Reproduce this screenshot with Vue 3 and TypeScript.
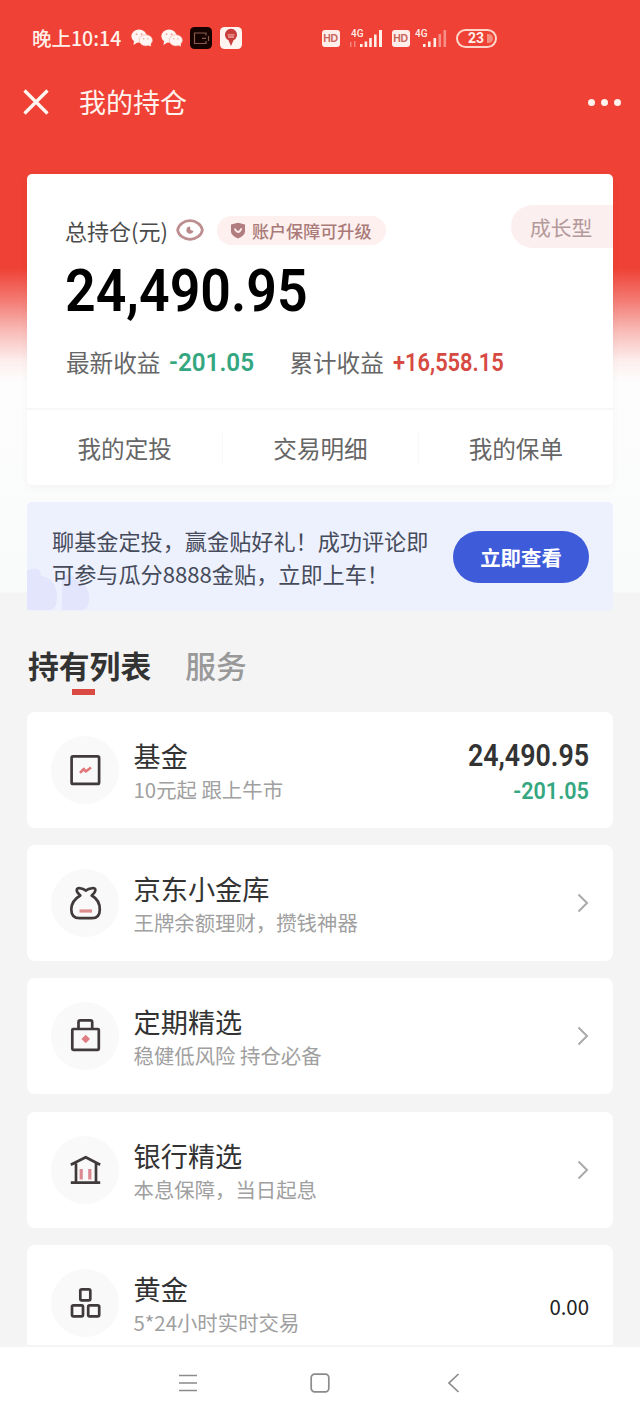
<script setup lang="ts">
interface Holding {
  icon: 'fund' | 'bag' | 'lock' | 'bank' | 'gold'
  title: string
  desc: string
  amount?: string
  change?: string
}

const holdings: Holding[] = [
  { icon: 'fund', title: '基金', desc: '10元起 跟上牛市', amount: '24,490.95', change: '-201.05' },
  { icon: 'bag', title: '京东小金库', desc: '王牌余额理财，攒钱神器' },
  { icon: 'lock', title: '定期精选', desc: '稳健低风险 持仓必备' },
  { icon: 'bank', title: '银行精选', desc: '本息保障，当日起息' },
  { icon: 'gold', title: '黄金', desc: '5*24小时实时交易', amount: '0.00' },
]
const links: string[] = ['我的定投', '交易明细', '我的保单']
</script>

<template>
  <div class="screen">
    <header class="status">
      <span class="clock">晚上10:14</span>
      <svg v-for="n in 2" :key="n" class="wechat" viewBox="0 0 22 18">
        <ellipse cx="8" cy="7.2" rx="7.6" ry="6.6" fill="#fff5f2" />
        <path d="M3 12 L2.5 16 L7 13Z" fill="#fff5f2" />
        <ellipse cx="14.8" cy="11.3" rx="6.6" ry="5.6" fill="#fff5f2" stroke="#f2a59a" stroke-width=".6" />
        <path d="M17 16 L20 17.5 L19.5 14Z" fill="#fff5f2" />
        <g fill="#efa294"><circle cx="5.5" cy="5.2" r=".9" /><circle cx="10.6" cy="5.2" r=".9" /><circle cx="12.7" cy="9.8" r=".7" /><circle cx="17" cy="9.8" r=".7" /></g>
      </svg>
      <svg class="app wallet" viewBox="0 0 22 22">
        <rect width="22" height="22" rx="4.5" fill="#160300" />
        <path d="M16 8.500V6H4.500V16.500H16V14M12 11.300h4M18.500 9v5" fill="none" stroke="#8b5a4c" stroke-width="1.200" />
      </svg>
      <svg class="app" viewBox="0 0 22 22">
        <rect width="22" height="22" rx="4.500" fill="#fff4ef" />
        <path d="M11 19 L8.500 13.200 A6 6 0 1 1 13.500 13.200Z" fill="#c93c3c" />
        <path d="M7.500 7.800h7M8 10h6" stroke="#eda49b" stroke-width="1.300" />
      </svg>
      <span class="hd first">HD</span>
      <svg class="signal" viewBox="0 0 34 24">
        <text x="1" y="11" font-size="10">4G</text>
        <g transform="translate(0 2)" fill="#fff0ea"><path d="M10 16h2.600v3H10zM14.600 13.500h2.600V19h-2.600zM19.200 10h2.600v9h-2.600zM24 6.500h2.600V19H24zM29 2h3v17h-3z" /><path d="M0 14h1.500v5H0zM4 13h1.500v6H4z" opacity=".4" /></g>
      </svg>
      <span class="hd">HD</span>
      <svg class="signal second" viewBox="0 0 34 24">
        <text x="0" y="11" font-size="10">4G</text>
        <g transform="translate(0 2)" fill="#fff0ea"><path d="M8 16h2.600v3H8zM13 13.500h2.600V19H13zM18.500 10h2.600v9h-2.600z" /><path d="M23.500 6h2.600v13h-2.600zM28.500 2h2.600v17h-2.600z" opacity=".45" /></g>
      </svg>
      <span class="battery">23<i></i></span>
    </header>

    <nav class="titlebar">
      <svg class="close" viewBox="0 0 26 26"><path d="M1.500 1.500 24.500 24.500M24.500 1.500 1.500 24.500" stroke="#fff6f2" stroke-width="3.300" /></svg>
      <h1>我的持仓</h1>
      <span class="more"><i></i><i></i><i></i></span>
    </nav>

    <section class="summary">
      <span class="growth">成长型</span>
      <div class="total-label">
        <span>总持仓(元)</span>
        <svg class="eye" viewBox="0 0 28 22">
          <path d="M1.600 11C2.500 5.500 8 1.700 14 1.700S25.500 5.500 26.400 11C25.500 16.500 20 20.300 14 20.300S2.500 16.500 1.600 11Z" fill="none" stroke="#bd8e90" stroke-width="2.700" />
          <path d="M14 7.500A3.600 3.600 0 1 0 17.500 12L14.500 11Z" fill="#b98a8c" />
        </svg>
        <span class="guard">
          <svg viewBox="0 0 16 17"><path d="M8 .8 15 2.500V9.500Q15 13.500 8 16.500Q1 13.500 1 9.500V2.500Z" fill="#b27d7f" /><path d="M4.800 6.500Q6 10 8 10T11.500 6.300" fill="none" stroke="#fbeceb" stroke-width="1.800" /></svg>
          账户保障可升级
        </span>
      </div>
      <div class="total"><span>24,490.95</span></div>
      <div class="profits">
        <span>最新收益</span><b class="green">-201.05</b>
        <span class="all">累计收益</span><b class="red">+16,558.15</b>
      </div>
      <div class="links"><span v-for="link in links" :key="link">{{ link }}</span></div>
    </section>

    <section class="banner">
      <svg class="quote" viewBox="0 0 64 44"><path d="M0 4Q8-1 13 4L14 9Q29 11 30 29Q30 43 22 43H0ZM35 43V10Q46 5 48 13Q61 17 62 29Q63 43 54 43Z" fill="#e2e5fb" /></svg>
      <p>聊基金定投，赢金贴好礼！成功评论即<br />可参与瓜分8888金贴，立即上车！</p>
      <button>立即查看</button>
    </section>

    <div class="tabs"><span class="active">持有列表</span><span>服务</span></div>

    <main class="list">
      <article v-for="item in holdings" :key="item.icon" class="item">
        <div class="badge">
          <svg viewBox="0 0 34 36" fill="none" stroke="#403a3b" stroke-width="2.700" stroke-linejoin="round">
            <template v-if="item.icon === 'fund'">
              <rect x="3.600" y="4.400" width="27.500" height="27.500" rx="1.500" />
              <path d="M12 20.800 15.800 17 17.800 19.500 23 15.500" stroke="#e27779" stroke-width="2.600" />
            </template>
            <template v-else-if="item.icon === 'bag'">
              <path d="M12.300 10.500C10 8.500 8 6 9 4Q9.800 2.600 12.500 3.300Q15 3.300 18 5.600Q20.500 3.300 23.500 3.300Q26.500 2.600 27.200 4C28 6 26 8.500 23.700 10.500C29 13.500 31.800 18 31.800 24.500Q31.800 33.200 24 33.200H11.500Q3.300 33.200 3.300 24.500C3.300 18 7 13.500 12.300 10.500Z" />
              <path d="M11.500 26H24" stroke="#dc8c8c" stroke-width="3.200" />
            </template>
            <template v-else-if="item.icon === 'lock'">
              <rect x="4.300" y="11" width="26.500" height="20.800" rx="1" />
              <path d="M10.500 11V4Q10.500 2.300 12.200 2.300H22.500Q24.200 2.300 24.200 4V11" />
              <path d="M17.700 16.700 22 21 17.700 25.300 13.400 21Z" fill="#df7e80" stroke="none" />
            </template>
            <template v-else-if="item.icon === 'bank'">
              <path d="M8 30.500V11.500M28 11.500V30.500M2.800 12.700 17.700 5.200 32.200 12.700M2.800 30.700H32.200" />
              <path d="M13.200 17V27.500M21.800 17V27.500" stroke="#dd8993" stroke-width="3.200" />
            </template>
            <template v-else>
              <rect x="12.300" y="4.300" width="10" height="11" rx="1.500" />
              <rect x="4" y="20.300" width="11" height="11" rx="1.500" />
              <rect x="20.200" y="20.300" width="11" height="11" rx="1.500" />
            </template>
          </svg>
        </div>
        <div class="names"><h2>{{ item.title }}</h2><p>{{ item.desc }}</p></div>
        <div v-if="item.change" class="values"><b>{{ item.amount }}</b><em>{{ item.change }}</em></div>
        <span v-else-if="item.amount" class="plain">{{ item.amount }}</span>
        <svg v-else class="arrow" viewBox="0 0 12 20"><path d="M1.500 1.500 10 10 1.500 18.500" fill="none" stroke="#aaa" stroke-width="2" /></svg>
      </article>
    </main>

    <footer class="system">
      <svg viewBox="0 0 20 20"><path d="M1 2.500H19M1 10H19M1 17.500H19" /></svg>
      <svg viewBox="0 0 20 20"><rect x="1.200" y="1.200" width="17.600" height="17.600" rx="3.500" /></svg>
      <svg viewBox="0 0 20 20"><path d="M14.500 1 5 10l9.500 9" /></svg>
    </footer>
  </div>
</template>

<style>
body { margin: 0; }
</style>

<style scoped>
* { box-sizing: border-box; }
.screen {
  width: 640px;
  height: 1422px;
  overflow: hidden;
  display: flex;
  flex-direction: column;
  font-family: "Noto Sans CJK SC", "Noto Sans", sans-serif;
  color: #333;
  background: linear-gradient(#ef4135 0, #ef4135 268px, #f37a72 300px, #f9bdb9 332px, #fdf0ef 362px, #fdfdfd 382px, #f9fafa 592px, #f4f4f4 593px);
}
h1, h2, p { margin: 0; font-weight: 400; }
svg { display: block; flex: none; }
.status { height: 76px; flex: none; display: flex; align-items: center; padding-left: 32px; color: #fff0ea; }
.clock { width: 99px; font-size: 19.500px; font-weight: 500; line-height: 28px; white-space: nowrap; }
.wechat { width: 22px; height: 18px; margin-right: 7.500px; }
.app { width: 22px; height: 22px; }
.wallet { margin-right: 7.500px; }
.hd { width: 18px; height: 17px; border-radius: 3px; background: #ffeee9; color: #c9675c; font: 700 10.500px/17px "Liberation Sans", sans-serif; text-align: center; letter-spacing: -.3px; }
.hd.first { margin-left: 80px; }
.signal { width: 34px; height: 24px; margin: 0 8px 0 10px; overflow: visible; }
.signal.second { margin: 0 7px 0 5px; }
.signal text { font-family: Roboto, sans-serif; font-weight: 500; fill: #ffeee9; }
.battery { position: relative; width: 41px; height: 19px; border: 2px solid #ffd5c9; border-radius: 10px; font: 700 14px/15px Roboto, sans-serif; text-align: center; }
.battery i { position: absolute; right: 2px; top: 3px; width: 6px; height: 9px; border-radius: 0 6px 6px 0; background: #f58f80; }
.titlebar { height: 52px; flex: none; display: flex; align-items: center; padding: 0 19px 0 23px; color: #fff2ed; }
.close { width: 26px; height: 26px; }
.titlebar h1 { margin-left: 30px; font-size: 27px; line-height: 40px; }
.more { margin-left: auto; display: flex; gap: 6px; }
.more i { width: 7px; height: 7px; border-radius: 50%; background: #fff2ed; }
.summary { position: relative; flex: none; margin: 46px 27px 0; height: 311px; padding-top: 38px; border-radius: 5px; background: #fff; box-shadow: 0 2px 8px rgba(0, 0, 0, .04); }
.growth { position: absolute; right: 0; top: 31px; width: 102px; height: 43px; padding-left: 19px; border-radius: 22px 0 0 22px; background: #fcefef; color: #b3999a; font-size: 20.800px; line-height: 44px; }
.total-label { display: flex; align-items: center; height: 36px; padding-left: 38px; font-size: 22px; color: #4b4b4b; white-space: nowrap; }
.eye { width: 28px; height: 22px; margin-left: 8px; }
.guard { display: flex; align-items: center; gap: 6px; width: 169px; height: 29px; margin-left: 13px; padding-left: 13px; border-radius: 15px; background: #fdf0ef; color: #a97a78; font-size: 17.100px; font-weight: 500; }
.guard svg { width: 16px; height: 17px; }
.total { height: 84px; padding-left: 37.500px; color: #000; font: 600 60px/86px Roboto, sans-serif; }
.total span { display: inline-block; transform: scaleX(.895); transform-origin: left; }
.profits { display: flex; height: 60px; padding-left: 39px; align-items: center; font-size: 23.600px; color: #666; white-space: nowrap; }
.profits b { font: 600 26.500px/32px Roboto, sans-serif; transform-origin: left; }
.profits .green { flex: none; width: 120px; margin-left: 9px; color: #35a780; transform: scaleX(.915); }
.profits .red { margin-left: 9px; color: #d64a42; transform: scaleX(.825); }
.links { display: grid; grid-template-columns: repeat(3, 1fr); height: 77px; margin-top: 16px; padding-top: 1px; align-items: center; border-top: 2px solid #f7f7f7; text-align: center; font-size: 23.600px; color: #666; }
.links span { line-height: 32px; }
.links span + span { border-left: 1px solid #f8f8f8; }
.banner { position: relative; flex: none; height: 109px; margin: 17px 27px 0; display: flex; align-items: center; justify-content: space-between; padding: 0 24px 0 25px; border-radius: 5px; background: #edf1fe; }
.quote { position: absolute; left: 0; bottom: 0; width: 64px; height: 44px; }
.banner p { position: relative; font-size: 22.150px; line-height: 33px; color: #464b5b; white-space: nowrap; }
.banner button { width: 136px; height: 52px; border: 0; border-radius: 26px; padding: 0; background: #3e5cda; color: #fff; font: 700 20.400px/50px "Noto Sans CJK SC", sans-serif; }
.tabs { flex: none; height: 101px; display: flex; gap: 34px; padding: 32px 0 0 28px; font-size: 30.800px; line-height: 44px; font-weight: 500; color: #999; }
.active { position: relative; color: #333; font-weight: 700; height: 52px; }
.active::after { content: ""; position: absolute; left: 44px; top: 46px; width: 23px; height: 6px; background: #d94a43; }
.list { flex: 1; min-height: 0; overflow: hidden; padding: 0 27px; display: flex; flex-direction: column; gap: 17.200px; }
.item { flex: none; display: flex; align-items: center; height: 116px; padding: 0 24px; border-radius: 8px; background: #fff; }
.badge { width: 68px; height: 68px; border-radius: 50%; background: #f9f9f9; display: grid; place-items: center; }
.badge svg { width: 34px; height: 36px; }
.names { margin-left: 14.500px; padding-top: 2px; white-space: nowrap; }
.names h2 { font-size: 27.200px; line-height: 36px; color: #333; }
.names p { font-size: 20.400px; line-height: 32px; color: #a0a0a0; }
.values { margin-left: auto; padding-top: 4px; display: flex; flex-direction: column; align-items: flex-end; font-family: Roboto, sans-serif; }
.values b { font-size: 31px; line-height: 37px; font-weight: 600; transform: scaleX(.865); transform-origin: right; }
.values em { font-size: 24.500px; font-style: normal; font-weight: 600; line-height: 34px; color: #35a780; transform: scaleX(.88); transform-origin: right; }
.plain { margin: 6px 0 0 auto; color: #222; font-size: 20.400px; }
.arrow { width: 12px; height: 20px; margin-left: auto; }
.system { flex: none; height: 77px; display: flex; align-items: center; padding: 0 0 4px 178px; border-top: 2px solid #f5f5f5; background: #fff; }
.system svg { width: 20px; height: 20px; margin-right: 112px; fill: none; stroke: #8b8b8b; stroke-width: 1.700; }
.system svg:nth-child(2) { margin-right: 114px; }
</style>
